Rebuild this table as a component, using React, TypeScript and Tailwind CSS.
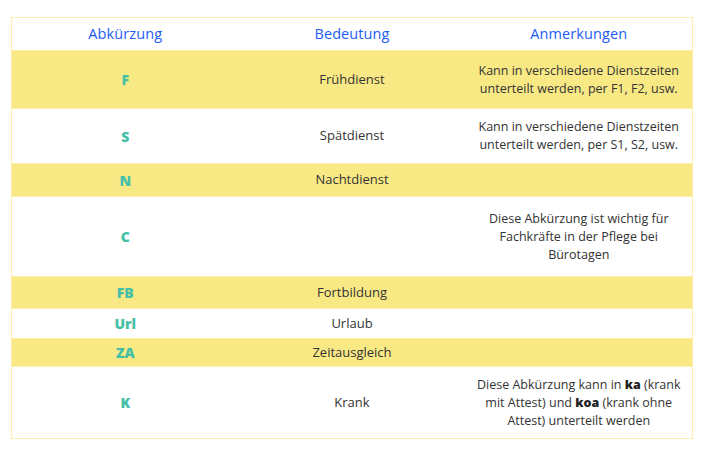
import React from 'react';

type Row = {
  abbr: string;
  meaning: string;
  note?: React.ReactNode;
  h: string;
  yellow: boolean;
};

const rows: Row[] = [
  {
    abbr: 'F',
    meaning: 'Frühdienst',
    note: (
      <>
        Kann in verschiedene Dienstzeiten
        <br />
        unterteilt werden, per F1, F2, usw.
      </>
    ),
    h: 'h-[58px]',
    yellow: true,
  },
  {
    abbr: 'S',
    meaning: 'Spätdienst',
    note: (
      <>
        Kann in verschiedene Dienstzeiten
        <br />
        unterteilt werden, per S1, S2, usw.
      </>
    ),
    h: 'h-[55px]',
    yellow: false,
  },
  { abbr: 'N', meaning: 'Nachtdienst', h: 'h-[33px]', yellow: true },
  {
    abbr: 'C',
    meaning: '',
    note: (
      <>
        Diese Abkürzung ist wichtig für
        <br />
        Fachkräfte in der Pflege bei
        <br />
        Bürotagen
      </>
    ),
    h: 'h-[80px]',
    yellow: false,
  },
  { abbr: 'FB', meaning: 'Fortbildung', h: 'h-[32px]', yellow: true },
  { abbr: 'Url', meaning: 'Urlaub', h: 'h-[30px]', yellow: false },
  { abbr: 'ZA', meaning: 'Zeitausgleich', h: 'h-[28px]', yellow: true },
  {
    abbr: 'K',
    meaning: 'Krank',
    note: (
      <>
        Diese Abkürzung kann in <b className="font-extrabold text-[#222]">ka</b> (krank
        <br />
        mit Attest) und <b className="font-extrabold text-[#222]">koa</b> (krank ohne
        <br />
        Attest) unterteilt werden
      </>
    ),
    h: 'h-[72px]',
    yellow: false,
  },
];

export default function App() {
  return (
    <div
      className="w-[705px] h-[454px] bg-white pt-[17px] pl-[11px]"
      style={{ fontFamily: '"Open Sans", "Liberation Sans", sans-serif' }}
    >
      <table className="w-[682px] border border-[#fcefae] border-collapse table-fixed">
        <thead>
          <tr className="h-[33px] bg-white">
            {['Abkürzung', 'Bedeutung', 'Anmerkungen'].map((t) => (
              <th
                key={t}
                className="text-center font-medium text-[14.5px] text-[#1d5cf5] tracking-[0.1px] align-middle"
              >
                {t}
              </th>
            ))}
          </tr>
        </thead>
        <tbody>
          {rows.map((r) => (
            <tr
              key={r.abbr}
              className={`${r.h} border-t border-[#fcefae] ${r.yellow ? 'bg-[#f9e985]' : 'bg-white'}`}
            >
              <td className="text-center align-middle font-extrabold text-[14px] text-[#45bfa6]">
                {r.abbr}
              </td>
              <td className="text-center align-middle font-medium text-[13px] text-[#333]">
                {r.meaning}
              </td>
              <td className="text-center align-middle font-medium text-[12.5px] leading-[18px] text-[#333]">
                {r.note}
              </td>
            </tr>
          ))}
        </tbody>
      </table>
    </div>
  );
}
